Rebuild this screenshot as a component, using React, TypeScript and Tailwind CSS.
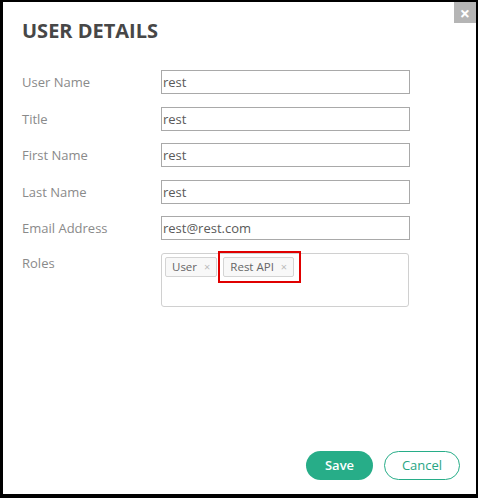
import React from "react";

const font = { fontFamily: '"Open Sans", "Noto Sans", Arial, sans-serif' };

function Row({ label, value }: { label: string; value: string }) {
  return (
    <div className="flex items-start">
      <div className="w-[139px] shrink-0 text-[13px] leading-[24px] text-[#8a8a8a]">{label}</div>
      <div className="w-[249px] h-[24px] border border-[#a9a9a9] bg-white pl-[1px] text-[13px] leading-[22px] text-[#5a5a5a]">
        {value}
      </div>
    </div>
  );
}

function Tag({ label, highlight }: { label: string; highlight?: boolean }) {
  return (
    <div className="relative flex h-[20px] items-center rounded-[2px] border border-[#d4d4d4] bg-[#f8f8f8] pl-[6px] pr-[6px] text-[11.5px] text-[#666]">
      <span>{label}</span>
      <span className="ml-[7px] text-[11px] leading-none text-[#bbb]">×</span>
      {highlight && (
        <div className="absolute left-[-6px] top-[-7px] h-[32px] w-[83px] border-2 border-[#e00000]" />
      )}
    </div>
  );
}

export default function App() {
  return (
    <div
      style={font}
      className="relative box-border flex h-[498px] w-[478px] flex-col border-t-2 border-r-2 border-b-4 border-l-[3px] border-black bg-white"
    >
      <div className="absolute right-0 top-0 flex h-[21px] w-[22px] items-center justify-center bg-[#b5b5b5] text-[18px] font-bold leading-none text-white">
        ×
      </div>
      <div className="pl-[19px] pt-[17px] text-[20px] font-bold leading-[24px] text-[#474747]">USER DETAILS</div>
      <div className="mt-[27px] flex flex-col gap-[12.5px] pl-[19px]">
        <Row label="User Name" value="rest" />
        <Row label="Title" value="rest" />
        <Row label="First Name" value="rest" />
        <Row label="Last Name" value="rest" />
        <Row label="Email Address" value="rest@rest.com" />
        <div className="flex items-start">
          <div className="w-[139px] shrink-0 text-[13px] leading-[20px] text-[#8a8a8a]">Roles</div>
          <div className="flex h-[54px] w-[248px] items-start gap-[6px] rounded-[3px] border border-[#d0d0d0] pl-[3px] pt-[3px]">
            <Tag label="User" />
            <Tag label="Rest API" highlight />
          </div>
        </div>
      </div>
      <div className="mt-auto flex justify-end gap-[11px] pb-[14px] pr-[16px]">
        <button className="h-[29px] w-[67px] rounded-full bg-[#27ad88] text-[13px] font-semibold text-white">
          Save
        </button>
        <button className="h-[29px] w-[76px] rounded-full border border-[#27ad88] bg-white text-[13px] text-[#27a583]">
          Cancel
        </button>
      </div>
    </div>
  );
}
